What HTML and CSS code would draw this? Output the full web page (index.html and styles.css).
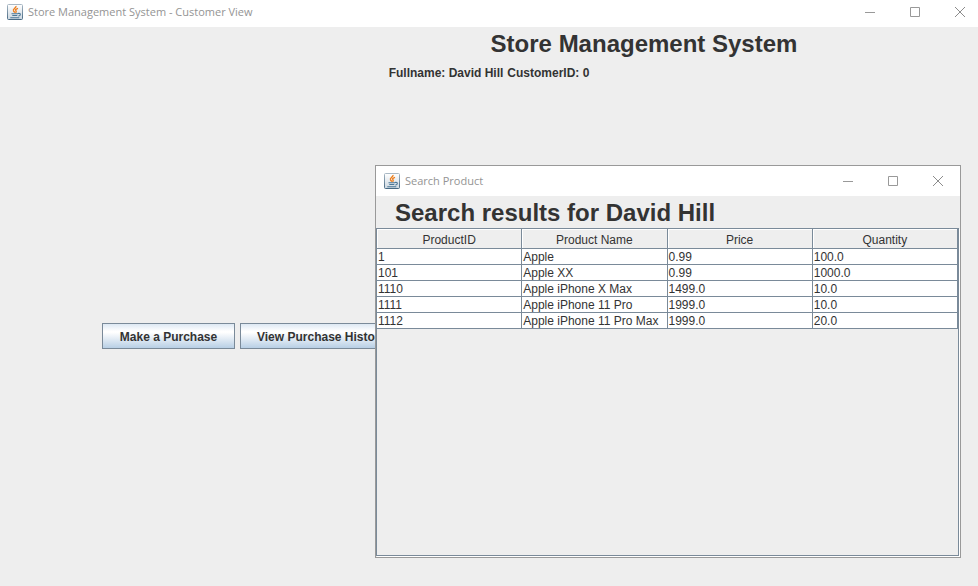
FILE: index.html
```html
<!DOCTYPE html>
<html lang="en">
<head>
<meta charset="utf-8">
<title>Store Management System - Customer View</title>
<link rel="stylesheet" href="styles.css">
</head>
<body>
<svg class="defs" aria-hidden="true">
  <defs>
    <linearGradient id="tile" x1="0" y1="0" x2="0" y2="1">
      <stop offset="0" stop-color="#ffffff"/>
      <stop offset="1" stop-color="#ccd7e0"/>
    </linearGradient>
    <linearGradient id="edge" x1="0" y1="0" x2="0" y2="1">
      <stop offset="0" stop-color="#a9b8c4"/>
      <stop offset="1" stop-color="#486a84"/>
    </linearGradient>
    <symbol id="java" viewBox="0 0 16 16">
      <rect x=".5" y=".5" width="15" height="15" rx="1" fill="url(#tile)" stroke="url(#edge)"/>
      <path d="M9 2C9.600 4 5.400 4.600 6.500 6.800L7.800 8.700M11 4.300C8.600 5 8.200 5.900 9 6.900C9.500 7.700 9.200 8.300 8.500 8.800" fill="none" stroke="#ee7d1a" stroke-width="1.400"/>
      <path d="M4.500 9.700H11M5.300 11.500H10.300M3.300 13.700H12.300M11 9.500C14.200 8.800 13.900 11.700 11.300 12" fill="none" stroke="#4b7796" stroke-width="1.100"/>
    </symbol>
    <symbol id="minimize" viewBox="0 0 12 12"><path d="M1 6.500H11" stroke="#999" fill="none"/></symbol>
    <symbol id="maximize" viewBox="0 0 12 12"><path d="M1.500 1.500H10.500V10.500H1.500Z" stroke="#999" fill="none"/></symbol>
    <symbol id="close" viewBox="0 0 12 12"><path d="M1 1L11 11M11 1L1 11" stroke="#8c8c8c" fill="none"/></symbol>
  </defs>
</svg>

<div class="app">
  <header class="titlebar">
    <svg class="java"><use href="#java"/></svg>
    <span class="caption">Store Management System - Customer View</span>
    <button class="control" aria-label="Minimize"><svg><use href="#minimize"/></svg></button>
    <button class="control" aria-label="Maximize"><svg><use href="#maximize"/></svg></button>
    <button class="control" aria-label="Close"><svg><use href="#close"/></svg></button>
  </header>
  <main class="content">
    <h1 class="heading">Store Management System</h1>
    <div class="customer"><span>Fullname: David Hill</span><span>CustomerID: 0</span></div>
    <div class="actions">
      <button class="action">Make a Purchase</button>
      <button class="action">View Purchase History</button>
    </div>
  </main>
</div>

<section class="dialog" role="dialog" aria-labelledby="dialog-title">
  <header class="titlebar">
    <svg class="java"><use href="#java"/></svg>
    <span class="caption" id="dialog-title">Search Product</span>
    <button class="control" aria-label="Minimize"><svg><use href="#minimize"/></svg></button>
    <button class="control" aria-label="Maximize"><svg><use href="#maximize"/></svg></button>
    <button class="control" aria-label="Close"><svg><use href="#close"/></svg></button>
  </header>
  <h2 class="heading">Search results for David Hill</h2>
  <div class="scroll">
    <table class="results">
      <thead>
        <tr><th>ProductID</th><th>Product Name</th><th>Price</th><th>Quantity</th></tr>
      </thead>
      <tbody>
        <tr><td>1</td><td>Apple</td><td>0.99</td><td>100.0</td></tr>
        <tr><td>101</td><td>Apple XX</td><td>0.99</td><td>1000.0</td></tr>
        <tr><td>1110</td><td>Apple iPhone X Max</td><td>1499.0</td><td>10.0</td></tr>
        <tr><td>1111</td><td>Apple iPhone 11 Pro</td><td>1999.0</td><td>10.0</td></tr>
        <tr><td>1112</td><td>Apple iPhone 11 Pro Max</td><td>1999.0</td><td>20.0</td></tr>
      </tbody>
    </table>
  </div>
</section>
</body>
</html>
```
FILE: styles.css
```css
* {
  box-sizing: border-box;
}

body {
  margin: 0;
  background: #eee;
  color: #333;
  font: 12px/16px "Liberation Sans", Arial, sans-serif;
}

.defs {
  position: absolute;
  width: 0;
  height: 0;
}

.app {
  display: flex;
  flex-direction: column;
  min-height: 100vh;
}

.titlebar {
  display: flex;
  align-items: center;
  flex: none;
  height: 27px;
  padding: 0 0 4px 7px;
  background: #fff;
  color: #949494;
  font: 11px/16px "Open Sans", "Noto Sans", sans-serif;
}

.java {
  width: 16px;
  height: 16px;
  margin-right: 5px;
}

.caption {
  flex: 1;
  white-space: nowrap;
}

.control {
  display: flex;
  justify-content: center;
  align-items: center;
  width: 45px;
  height: 22px;
  padding: 0;
  border: 0;
  background: none;
}

.app .control:last-child {
  width: 41px;
  padding-left: 5px;
}

.control svg {
  width: 12px;
  height: 12px;
}

.content {
  display: flex;
  flex-direction: column;
  flex: 1;
}

.heading {
  margin: 0;
  padding-top: 2px;
  font-size: 24px;
  line-height: 30px;
  white-space: nowrap;
}

.content .heading {
  padding-left: 310px;
  text-align: center;
}

.customer {
  display: flex;
  justify-content: center;
  gap: 4px;
  padding-top: 6px;
  font-weight: bold;
}

.actions {
  display: flex;
  align-items: center;
  gap: 5px;
  flex: 1;
  padding: 4px 0 0 102px;
}

.action {
  min-width: 133px;
  height: 26px;
  padding: 2px 16px 0;
  border: 1px solid #7a8a99;
  background: linear-gradient(#dde8f3, #fff 30%, #fff 35%, #b8cfe5);
  color: #333;
  font: bold 12px/16px "Liberation Sans", Arial, sans-serif;
  white-space: nowrap;
}

.dialog {
  position: absolute;
  inset: 165px 17px 28px 375px;
  display: flex;
  flex-direction: column;
  border: 1px solid #999;
  background: #eee;
}

.dialog .titlebar {
  height: 30px;
  padding: 0 0 1px 8px;
}

.dialog .heading {
  padding-left: 19px;
}

.scroll {
  flex: 1;
  border: 1px solid #7a8a99;
  box-shadow: 1px 1px #fff;
  margin: 0 1px 1px 0;
}

.results {
  width: 100%;
  border-spacing: 0;
  table-layout: fixed;
}

.results th,
.results td {
  padding: 1px 1px 0;
  border: solid #7a8a99;
  border-width: 0 1px 1px 0;
  white-space: nowrap;
}

.results th {
  height: 20px;
  padding-top: 3px;
  background: #eee;
  box-shadow: inset 1px 1px #fff;
  font-weight: normal;
  line-height: 16px;
}

.results td {
  height: 16px;
  background: #fff;
  line-height: 14px;
}
```
